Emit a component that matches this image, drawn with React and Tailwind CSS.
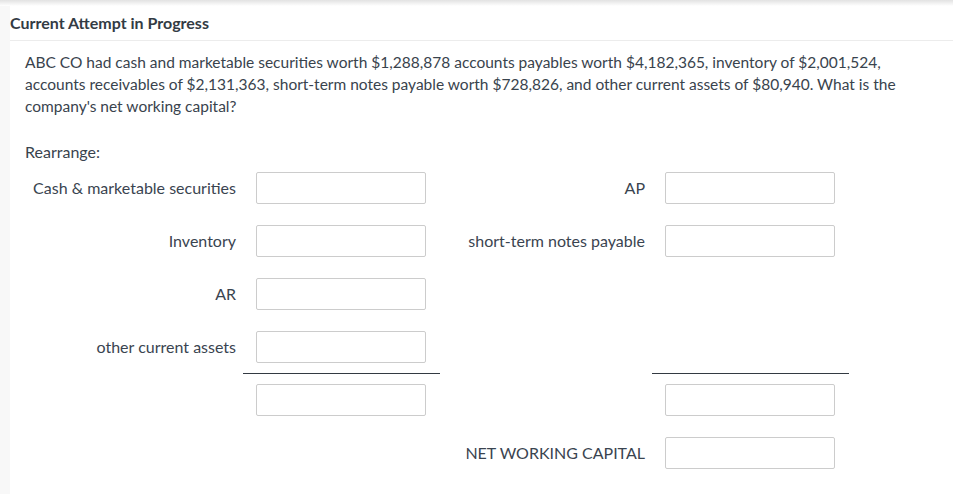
import React from 'react';

const LEFT = ['Cash & marketable securities', 'Inventory', 'AR', 'other current assets'];
const RIGHT = ['AP', 'short-term notes payable', null, null];

function Field({ label, blank, className = '' }) {
  return (
    <div className={`flex items-center h-[32px] ${className}`}>
      <div className="w-[231px] pr-[20px] text-right text-[16px] text-[#3a4450]">{label}</div>
      {blank ? (
        <div className="w-[170px] h-[32px]" />
      ) : (
        <input
          type="text"
          className="w-[170px] h-[32px] border border-[#cccccc] rounded-[2px] bg-white outline-none"
        />
      )}
    </div>
  );
}

function Column({ rows, total }) {
  return (
    <div className="flex flex-col w-[401px] shrink-0">
      {rows.map((label, i) => (
        <Field key={i} label={label} blank={label === null} className={i < rows.length - 1 ? 'mb-[21px]' : ''} />
      ))}
      {/* sum line */}
      <div className="ml-[218px] w-[197px] shrink-0 h-px bg-[#333a42] my-[10px]" />
      <Field label="" />
      {total ? <Field label={total} className="mt-[21px]" /> : null}
    </div>
  );
}

export default function App() {
  return (
    <div className="min-h-screen bg-white font-['Lato','Liberation_Sans',sans-serif] text-[#39434d]">
      <div className="h-[6px] bg-gradient-to-b from-[#e2e2e2] to-white" />
      <div className="flex">
        <div className="w-[10px] bg-[#f8f8f8] shrink-0" />
        <div className="flex-1">
          <div className="h-[35px] flex items-center border-b border-[#ececec]">
            <h1 className="text-[16px] font-bold text-[#333b44]">Current Attempt in Progress</h1>
          </div>
          <div className="pl-[15px] pr-[20px] pt-[10px]">
            <p className="text-[15.5px] leading-[22px] text-[#39434d]">
              ABC CO had cash and marketable securities worth $1,288,878 accounts payables worth $4,182,365, inventory of $2,001,524,
              accounts receivables of $2,131,363, short-term notes payable worth $728,826, and other current assets of $80,940. What is the
              company's net working capital?
            </p>
            <div className="mt-[24px] text-[16px] leading-[22px]">Rearrange:</div>
            <div className="mt-[9px] flex gap-[8px] pb-[25px]">
              <Column rows={LEFT} />
              <Column rows={RIGHT} total="NET WORKING CAPITAL" />
            </div>
          </div>
        </div>
      </div>
    </div>
  );
}
